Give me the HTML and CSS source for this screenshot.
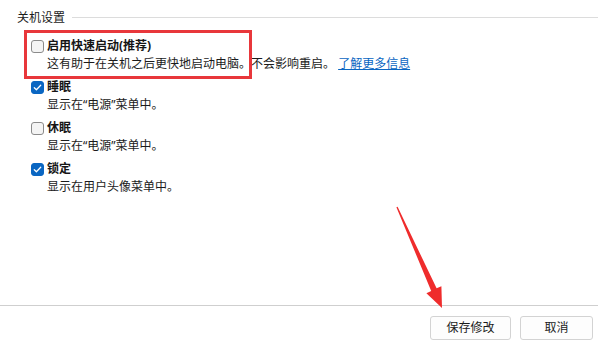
FILE: index.html
```html
<!DOCTYPE html>
<html lang="zh-CN">
<head>
<meta charset="utf-8">
<link rel="stylesheet" href="styles.css">
</head>
<body>
<div class="page">
  <main class="content">
    <div class="section-title">
      <span>关机设置</span>
      <span class="rule"></span>
    </div>
    <div class="options">
      <div class="option">
        <div class="option-row">
          <span class="box"></span>
          <span class="label">启用快速启动(推荐)</span>
        </div>
        <div class="desc">这有助于在关机之后更快地启动电脑。不会影响重启。 <a class="link" href="#">了解更多信息</a></div>
      </div>
      <div class="option">
        <div class="option-row">
          <span class="box checked"><svg viewBox="0 0 13 13" width="13" height="13"><path d="M3.3 6.8 L5.4 8.8 L9.7 4.3" fill="none" stroke="#fff" stroke-width="1.3" stroke-linecap="round" stroke-linejoin="round"/></svg></span>
          <span class="label">睡眠</span>
        </div>
        <div class="desc">显示在“电源”菜单中。</div>
      </div>
      <div class="option">
        <div class="option-row">
          <span class="box"></span>
          <span class="label">休眠</span>
        </div>
        <div class="desc">显示在“电源”菜单中。</div>
      </div>
      <div class="option">
        <div class="option-row">
          <span class="box checked"><svg viewBox="0 0 13 13" width="13" height="13"><path d="M3.3 6.8 L5.4 8.8 L9.7 4.3" fill="none" stroke="#fff" stroke-width="1.3" stroke-linecap="round" stroke-linejoin="round"/></svg></span>
          <span class="label">锁定</span>
        </div>
        <div class="desc">显示在用户头像菜单中。</div>
      </div>
    </div>
  </main>
  <footer class="footer">
    <button class="btn btn-save">保存修改</button>
    <button class="btn btn-cancel">取消</button>
  </footer>
  <div class="highlight"></div>
  <svg class="arrow" width="598" height="348" viewBox="0 0 598 348">
    <polygon points="397.6,206.8 436.6,288.3 441.4,286.2 442,308 426.4,293.2 431.2,290.9 396.4,207.2" fill="#ef2c2c"/>
  </svg>
</div>
</body>
</html>
```

FILE: styles.css
```css
* { box-sizing: border-box; }
html, body {
  margin: 0;
  padding: 0;
  background: #ffffff;
}
body {
  font-family: "Noto Sans", "Noto Sans CJK SC", sans-serif;
  font-size: 12px;
  color: #1b1b1b;
}
.page {
  position: relative;
  width: 598px;
  height: 348px;
  display: flex;
  flex-direction: column;
  overflow: hidden;
}
.content {
  flex: 1;
  padding: 9px 0 0 17px;
}
.section-title {
  display: flex;
  align-items: center;
  gap: 7px;
  height: 18px;
  line-height: 18px;
  font-size: 12px;
}
.rule {
  flex: 1;
  height: 1px;
  background: #dcdcdc;
  margin-top: -1px;
}
.options {
  display: flex;
  flex-direction: column;
  gap: 5px;
  padding: 10px 0 0 14px;
}
.option-row {
  display: flex;
  align-items: center;
  gap: 3px;
  height: 18px;
}
.box {
  width: 13px;
  height: 13px;
  border: 1px solid #8b8b8b;
  border-radius: 3px;
  background: #f4f4f4;
  display: inline-flex;
  flex: none;
  margin-top: 1px;
}
.box.checked {
  background: #0a66c2;
  border-color: #0a66c2;
}
.box.checked svg {
  margin: -1px;
  flex: none;
}
.label {
  font-weight: 700;
  line-height: 18px;
  font-size: 12px;
  color: #151515;
}
.desc {
  padding-left: 16px;
  line-height: 18px;
  height: 18px;
  font-size: 12px;
  color: #1b1b1b;
  white-space: nowrap;
}
.link {
  color: #0a66c2;
  text-decoration: underline;
}
.footer {
  height: 43px;
  border-top: 1px solid #cfcfcf;
  display: flex;
  justify-content: flex-end;
  align-items: flex-start;
  gap: 9px;
  padding: 10px 5px 0 0;
}
.btn {
  height: 24px;
  border: 1px solid #d3d3d3;
  border-radius: 3px;
  background: #fdfdfd;
  font-family: "Noto Sans", "Noto Sans CJK SC", sans-serif;
  font-size: 12px;
  color: #1b1b1b;
  padding: 0;
  line-height: 22px;
}
.btn-save { width: 81px; }
.btn-cancel { width: 73px; }
.highlight {
  position: absolute;
  left: 24px;
  top: 30px;
  width: 228px;
  height: 49px;
  border: 3px solid #e8373b;
  pointer-events: none;
}
.arrow {
  position: absolute;
  left: 0;
  top: 0;
  pointer-events: none;
}
```
